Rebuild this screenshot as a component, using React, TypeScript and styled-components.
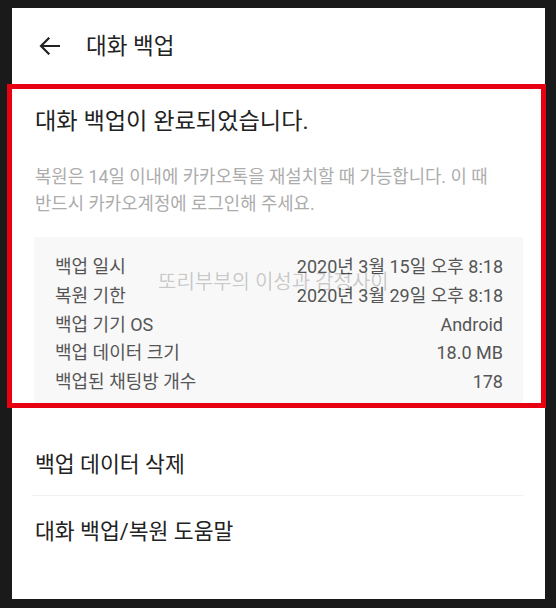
import React from "react";
import styled, { createGlobalStyle } from "styled-components";

const Global = createGlobalStyle`
  html, body { margin: 0; padding: 0; background: #1a1a1a; }
  body { font-family: Roboto, "Noto Sans CJK KR", sans-serif; }
  * { box-sizing: border-box; }
`;

const Screen = styled.div`
  margin: 8px 11px 0 12px;
  width: 533px;
  height: 591px;
  background: #ffffff;
  display: flex;
  flex-direction: column;
`;

const Header = styled.header`
  height: 76px;
  display: flex;
  align-items: center;
  padding: 0 0 0 27px;
  gap: 26px;
  color: #222;
`;

const HeaderTitle = styled.h1`
  margin: 0;
  font-size: 22.5px;
  font-weight: 400;
  line-height: 30px;
  color: #222;
`;

const Highlight = styled.section`
  margin: 0 -1px 0 -5px;
  border: 5px solid #e60012;
  height: 324px;
  padding: 17px 18px 0 22px;
  display: flex;
  flex-direction: column;
  overflow: hidden;
`;

const Heading = styled.h2`
  margin: 0 0 0 1px;
  font-size: 23.2px;
  font-weight: 400;
  line-height: 30px;
  color: #222;
`;

const Desc = styled.p`
  margin: 27px 0 0 1px;
  font-size: 17.8px;
  line-height: 27px;
  color: #acacac;
  white-space: nowrap;
`;

const InfoBox = styled.div`
  position: relative;
  margin-top: 20px;
  background: #f8f8f8;
  padding: 16px 20px 10px 21px;
`;

const InfoRow = styled.div`
  display: flex;
  justify-content: space-between;
  font-size: 18px;
  line-height: 28.8px;
  color: #555;
`;

const Watermark = styled.span`
  position: absolute;
  left: 124px;
  top: 32px;
  font-size: 20px;
  line-height: 26px;
  color: rgba(0, 0, 0, 0.2);
  white-space: nowrap;
  pointer-events: none;
`;

const Menu = styled.nav`
  margin-top: 21px;
  padding: 0 21px 0 20px;
  display: flex;
  flex-direction: column;
`;

const MenuItem = styled.div<{ $divider?: boolean }>`
  height: 67px;
  display: flex;
  align-items: center;
  padding-left: 3px;
  font-size: 21.6px;
  color: #222;
  border-bottom: ${(p) => (p.$divider ? "1px solid #f2f2f2" : "none")};
`;

const rows: [string, string][] = [
  ["백업 일시", "2020년 3월 15일 오후 8:18"],
  ["복원 기한", "2020년 3월 29일 오후 8:18"],
  ["백업 기기 OS", "Android"],
  ["백업 데이터 크기", "18.0 MB"],
  ["백업된 채팅방 개수", "178"],
];

const BackArrow = () => (
  <svg width="21" height="18" viewBox="0 0 21 18" fill="none">
    <path
      d="M20 9H2.5M9.5 1.5L2 9l7.5 7.5"
      stroke="#222"
      strokeWidth="2.2"
      strokeLinecap="square"
    />
  </svg>
);

export default function App() {
  return (
    <>
      <Global />
      <Screen>
        <Header>
          <BackArrow />
          <HeaderTitle>대화 백업</HeaderTitle>
        </Header>
        <Highlight>
          <Heading>대화 백업이 완료되었습니다.</Heading>
          <Desc>
            복원은 14일 이내에 카카오톡을 재설치할 때 가능합니다. 이 때
            <br />
            반드시 카카오계정에 로그인해 주세요.
          </Desc>
          <InfoBox>
            {rows.map(([k, v]) => (
              <InfoRow key={k}>
                <span>{k}</span>
                <span>{v}</span>
              </InfoRow>
            ))}
            <Watermark>또리부부의 이성과 감정사이</Watermark>
          </InfoBox>
        </Highlight>
        <Menu>
          <MenuItem $divider>백업 데이터 삭제</MenuItem>
          <MenuItem>대화 백업/복원 도움말</MenuItem>
        </Menu>
      </Screen>
    </>
  );
}
